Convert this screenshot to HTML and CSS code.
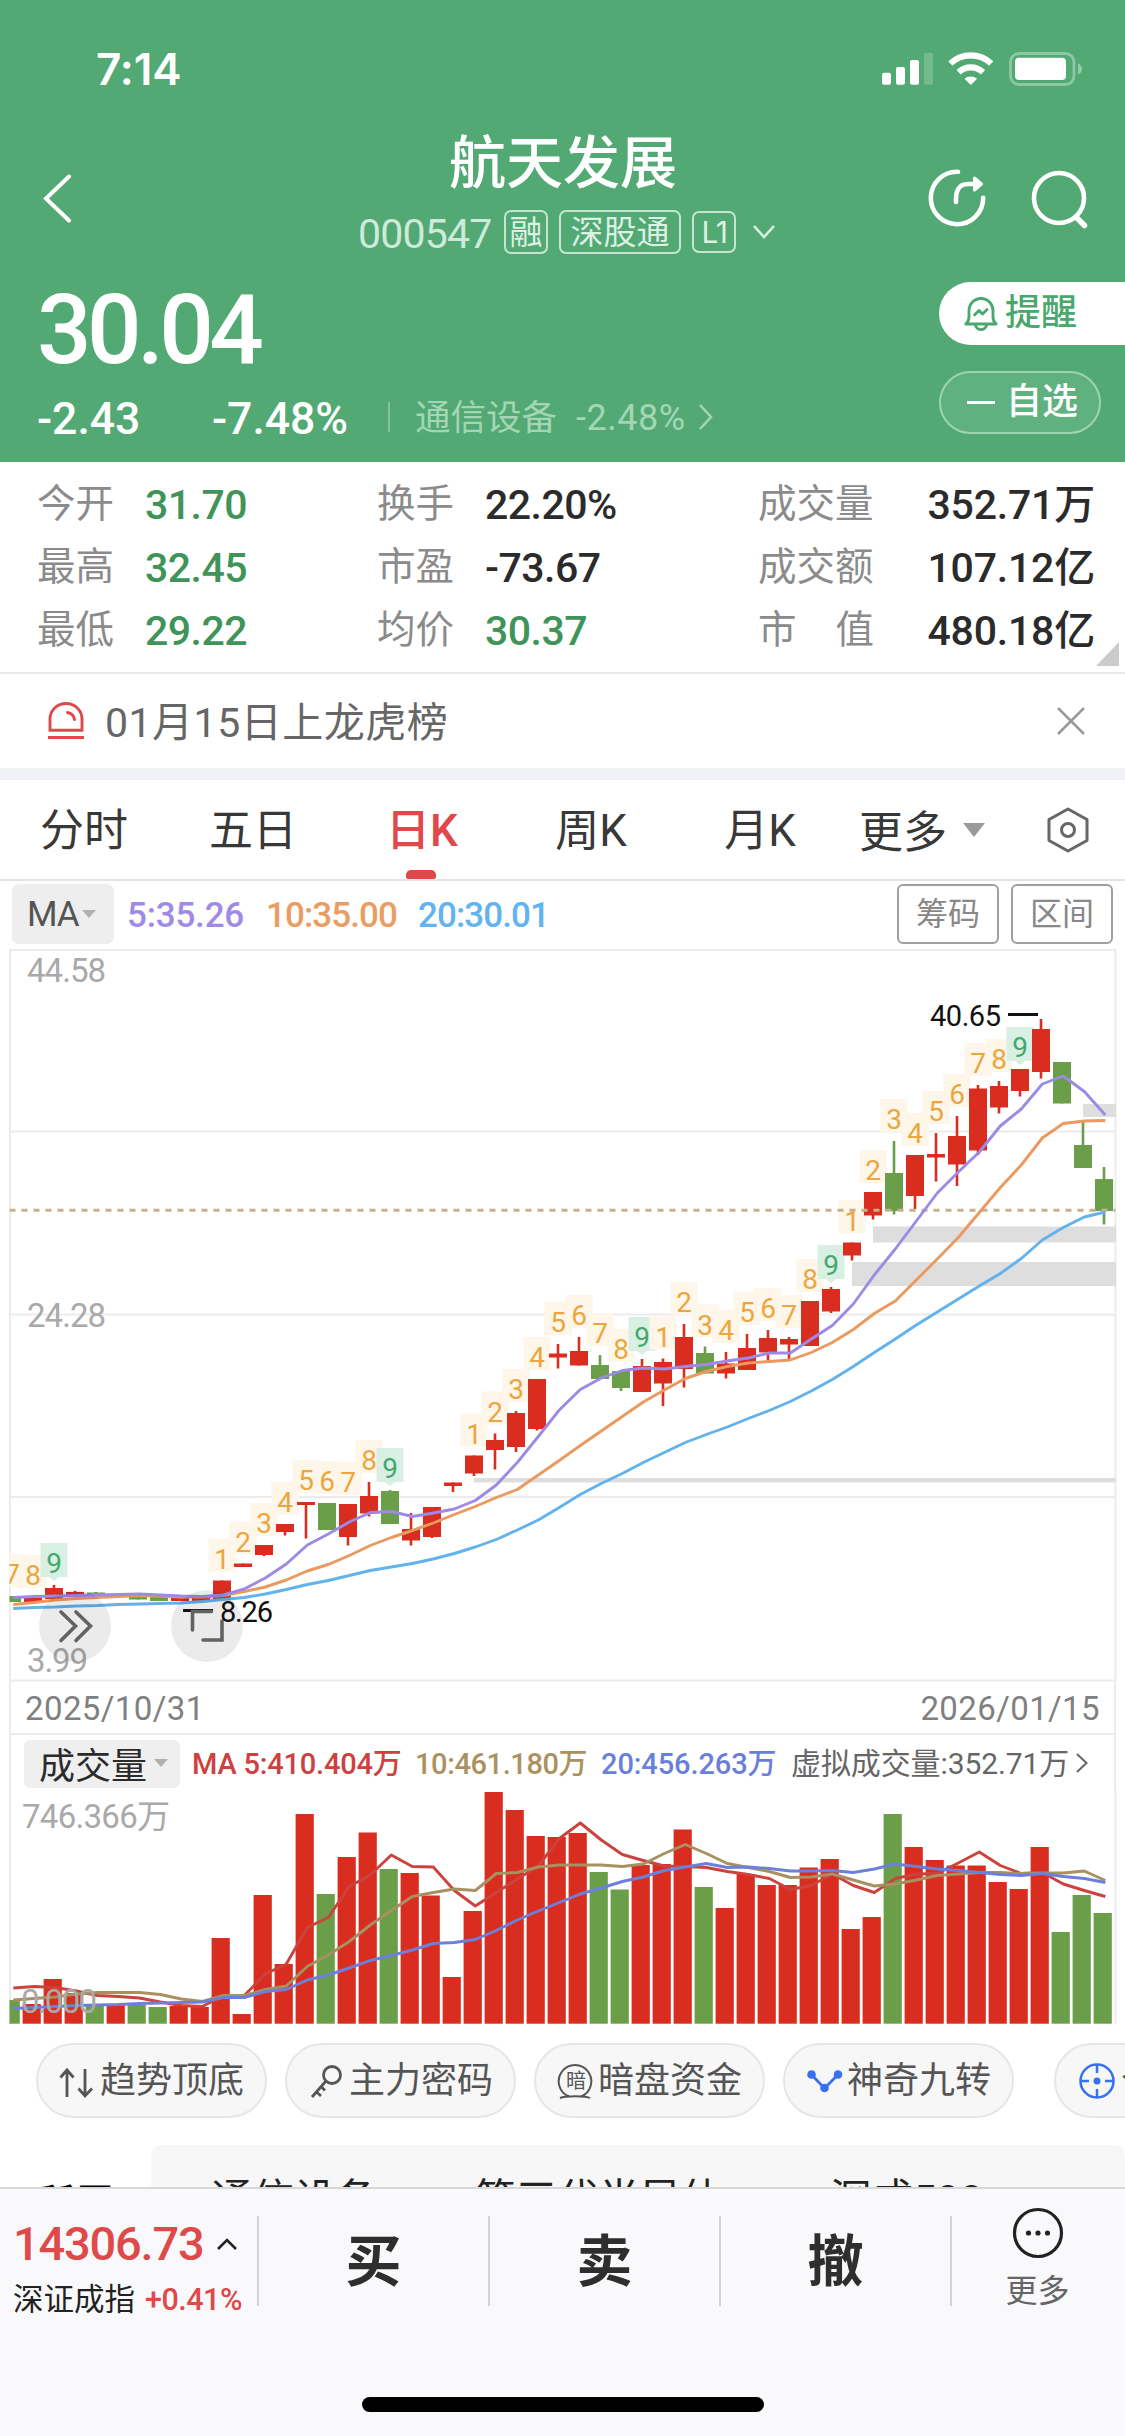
FILE: index.html
```html
<!DOCTYPE html>
<html lang="zh-CN">
<head>
<meta charset="utf-8">
<title>航天发展 000547</title>
<link rel="stylesheet" href="styles.css">
</head>
<body>
<div class="screen">
  <header class="header">
    <div class="status">
      <span class="time">7:14</span>
      <svg class="status-icons" viewBox="882 50 202 38" fill="#fff">
        <rect x="882" y="72.7" width="9" height="12" rx="2"/>
        <rect x="896" y="67" width="9" height="17.7" rx="2"/>
        <rect x="910" y="60" width="9" height="24.7" rx="2"/>
        <rect x="924" y="52.7" width="9" height="32" rx="2" opacity=".2"/>
        <path d="M970.8 85l-6.3-6.2a9.6 9.6 0 0 1 12.6 0z"/>
        <g fill="none" stroke="#fff" stroke-width="6.2">
          <path d="M958.6 72.2a18 18 0 0 1 24.4 0"/>
          <path d="M950.4 63.6a29.5 29.5 0 0 1 40.8 0"/>
        </g>
        <rect x="1010.5" y="53.5" width="63.5" height="31" rx="8.5" fill="none" stroke="#fff" stroke-width="2.8" opacity=".35"/>
        <rect x="1015" y="57.8" width="51" height="22.3" rx="4"/>
        <path d="M1078 63.5q4 2 4 5.500t-4 5.500z" opacity=".4"/>
      </svg>
    </div>
    <div class="nav">
      <svg class="back" viewBox="44 174 30 50"><path d="M70 176.500 47 198.500l23 22" fill="none" stroke="#fff" stroke-width="4" stroke-linecap="round"/></svg>
      <div class="title-block">
        <h1 class="title">航天发展</h1>
        <div class="subtitle">
          <span class="code">000547</span>
          <span class="tag tag-one">融</span>
          <span class="tag tag-three">深股通</span>
          <span class="tag tag-l">L1</span>
          <svg class="chev" viewBox="0 0 24 16"><path d="M2 2l10 11L22 2" fill="none" stroke="#d9efe0" stroke-width="2.600"/></svg>
        </div>
      </div>
      <svg class="nav-icons" viewBox="926 166 164 64" fill="none" stroke="#fff" stroke-width="4.600" stroke-linecap="round">
        <path d="M958 171.800a26.200 26.200 0 1 0 25.200 26"/>
        <path d="M956 202c-.5-10 2-18 12-18h7"/>
        <path d="M974.500 178l7 6-7 6z" fill="#fff" stroke-width="3" stroke-linejoin="round"/>
        <circle cx="1059" cy="198" r="25"/>
        <path d="M1076.500 217.500l8 8" stroke-width="5.500"/>
      </svg>
    </div>
    <div class="quote">
      <div class="quote-left">
        <div class="price">30.04</div>
        <div class="change">
          <span class="delta">-2.43</span>
          <span class="delta pct">-7.48%</span>
          <i class="bar"></i>
          <span class="sector">通信设备</span>
          <span class="sector-pct">-2.48%</span>
          <svg class="sector-chev" viewBox="0 0 16 28"><path d="M2 2l11 12L2 26" fill="none" stroke="#a4d6b5" stroke-width="2.500"/></svg>
        </div>
      </div>
      <div class="quote-right">
        <div class="pill remind">
          <svg viewBox="0 0 34 36" fill="none" stroke="#4aa76e" stroke-width="2.800" stroke-linejoin="round" stroke-linecap="round">
            <path d="M1.800 28h30.400c-2.500-2-3.200-4-3.200-7v-6.500a12 12 0 0 0-24 0V21c0 3-.8 5-3.200 7z"/>
            <path d="M10.500 19l4.500-4.500 3.500 3.500 4.500-4.500"/><path d="M11.500 29.500c2 5.500 9 5.500 11 0"/>
          </svg>
          <span>提醒</span>
        </div>
        <div class="pill watch"><i class="minus"></i><span>自选</span></div>
      </div>
    </div>
  </header>

  <section class="stats">
    <span class="k">今开</span><b class="v up">31.70</b><span class="k">换手</span><b class="v">22.20%</b><span class="k">成交量</span><b class="v end">352.71万</b>
    <span class="k">最高</span><b class="v up">32.45</b><span class="k">市盈</span><b class="v">-73.67</b><span class="k">成交额</span><b class="v end">107.12亿</b>
    <span class="k">最低</span><b class="v up">29.22</b><span class="k">均价</span><b class="v up">30.37</b><span class="k spread"><i>市</i><i>值</i></span><b class="v end">480.18亿</b>
    <i class="fold"></i>
  </section>

  <section class="notice">
    <svg class="siren" viewBox="0 0 36 38" fill="none" stroke="#e0494c" stroke-width="2.900">
      <path d="M2 28.300V17a16 15.500 0 0 1 32 0v11.300zM0 35.500h36"/><path d="M19.500 10.500q6 1 7 7" stroke-linecap="round"/>
    </svg>
    <span class="notice-text">01月15日上龙虎榜</span>
    <svg class="close" viewBox="0 0 28 28"><path d="M1 1l26 26M27 1L1 27" stroke="#999" stroke-width="2.500"/></svg>
  </section>

  <nav class="tabs">
    <span class="tab">分时</span><span class="tab">五日</span><span class="tab active">日K</span><span class="tab">周K</span><span class="tab">月K</span>
    <span class="more">更多</span><i class="tri"></i>
    <svg class="hex" viewBox="0 0 42 46" fill="none" stroke="#666" stroke-width="3" stroke-linejoin="round"><path d="M21 2l19 10.500v21L21 44 2 33.500v-21z"/><circle cx="21" cy="23" r="6.500"/></svg>
  </nav>

  <div class="ma-row">
    <span class="ma-btn">MA<i class="tri small"></i></span>
    <span class="ma m5">5:35.26</span><span class="ma m10">10:35.00</span><span class="ma m20">20:30.01</span>
    <span class="box-btn first">筹码</span><span class="box-btn">区间</span>
  </div>

  <svg class="pane" id="price" viewBox="0 946 1125 736"></svg>
  <div class="dates"><span>2025/10/31</span><span>2026/01/15</span></div>
  <div class="vol-head">
    <span class="vol-btn">成交量<i class="tri small"></i></span>
    <span class="vm v5">MA 5:410.404万</span><span class="vm v10">10:461.180万</span><span class="vm v20">20:456.263万</span>
    <span class="virt">虚拟成交量:352.71万</span>
    <svg class="virt-chev" viewBox="0 0 12 20"><path d="M1 1l9.500 9L1 19" fill="none" stroke="#666" stroke-width="2"/></svg>
  </div>
  <svg class="pane" id="volume" viewBox="0 1790 1125 236"></svg>

  <div class="chips">
    <div class="chip">
      <svg viewBox="0 0 38 38" fill="none" stroke="#555" stroke-width="2.800"><path d="M8 35V8M1.500 15.500L8 8l6.500 7.500M26 7v27M19.500 26.500L26 34l7-7.500"/></svg><span>趋势顶底</span>
    </div>
    <div class="chip">
      <svg viewBox="0 0 38 38" fill="none" stroke="#555" stroke-width="2.800"><circle cx="24" cy="13" r="8.500"/><path d="M18 19L4 35M8.500 30l4.500 4M13 24.500l4 4"/></svg><span>主力密码</span>
    </div>
    <div class="chip">
      <svg viewBox="0 0 38 38" fill="none" stroke="#555" stroke-width="2"><path d="M12 34.500a16.300 16.300 0 1 1 12 0M3 36c5-2.500 26-2.500 30 0"/><text class="dark-glyph" x="9" y="26">暗</text></svg><span>暗盘资金</span>
    </div>
    <div class="chip">
      <svg viewBox="0 0 38 38"><path d="M5.500 12.500l13 14 13.500-14" fill="none" stroke="#3671f0" stroke-width="2.800"/><g fill="#3671f0"><circle cx="5.500" cy="12.500" r="4.300"/><circle cx="18.500" cy="26" r="4.300"/><circle cx="32" cy="12.500" r="4.300"/></g></svg><span>神奇九转</span>
    </div>
    <i class="chip-sep"></i>
    <div class="chip last">
      <svg viewBox="0 0 38 38" fill="none" stroke="#3671f0" stroke-width="2.500"><circle cx="19" cy="19" r="16.500"/><path d="M19 2v9M19 27v9M2 19h9M27 19h9"/><circle cx="19" cy="19" r="3.500" fill="#3671f0" stroke="none"/></svg><span>个股</span>
    </div>
  </div>

  <div class="related">
    <b class="rel-title">所属</b>
    <div class="rel-panel"><span>通信设备</span><span>第三代半导体</span><span>深成500</span></div>
  </div>

  <footer class="footer">
    <div class="actions">
      <div class="index">
        <div class="index-top"><span class="index-val">14306.73</span><svg viewBox="0 0 20 12"><path d="M1 11l9-9 9 9" fill="none" stroke="#222" stroke-width="2.600"/></svg></div>
        <div class="index-sub"><span>深证成指</span><span class="red">+0.41%</span></div>
      </div>
      <div class="act">买</div><div class="act">卖</div><div class="act">撤</div>
      <div class="act-more">
        <svg viewBox="0 0 52 52"><circle cx="26" cy="26" r="23.500" fill="none" stroke="#222" stroke-width="3.200"/><g fill="#222"><circle cx="16.500" cy="26" r="2.600"/><circle cx="26" cy="26" r="2.600"/><circle cx="35.500" cy="26" r="2.600"/></g></svg>
        <span>更多</span>
      </div>
    </div>
    <i class="home"></i>
  </footer>
</div>
<script src="chart.js"></script>
</body>
</html>
```
FILE: styles.css
```css
* { box-sizing: border-box; }
body { margin: 0; background: #fff; font-family: Roboto, "Noto Sans CJK SC", sans-serif; }
i { font-style: normal; display: block; }
svg { display: block; flex: none; }
span, b { white-space: nowrap; }
.screen { width: 1125px; height: 2436px; overflow: hidden; display: flex; flex-direction: column; }
.screen > * { flex: none; }

.header { height: 462px; background: #52a974; color: #fff; }
.status { height: 132px; padding: 50px 41px 0 96px; display: flex; justify-content: space-between; }
.time { font: 600 44px/38px Inter, sans-serif; letter-spacing: -.1px; }
.status-icons { width: 202px; height: 38px; }
.nav { height: 134px; display: flex; }
.back { width: 30px; height: 50px; margin: 42px 0 0 43px; }
.title-block { width: 853px; }
.title { margin: 0; padding-left: 376px; font-size: 57px; font-weight: 500; line-height: 64px; white-space: nowrap; }
.subtitle { display: flex; align-items: center; height: 44px; margin-top: 14px; padding-left: 285px; }
.code { font-size: 41px; line-height: 44px; letter-spacing: -.8px; color: #cfeada; width: 146px; padding-top: 3px; }
.tag { height: 44px; line-height: 41px; border: 2px solid #c5e5d0; border-radius: 7px; font-size: 33px; text-align: center; color: #dcf1e3; margin-right: 11px; }
.tag-one { width: 44px; }
.tag-three { width: 122px; }
.tag-l { width: 44px; height: 42px; line-height: 38px; font-size: 30px; font-weight: 400; font-family: Inter, sans-serif; letter-spacing: -1.500px; }
.chev { width: 24px; height: 16px; margin-left: 5px; }
.nav-icons { width: 164px; height: 64px; margin-top: 34px; }
.quote { display: flex; justify-content: space-between; height: 196px; }
.price { padding-left: 37px; font-size: 96px; line-height: 96px; font-weight: 500; letter-spacing: -4.500px; margin-top: 16px; }
.change { display: flex; align-items: center; height: 50px; margin-top: 14px; padding: 3px 0 0 37px; }
.delta { font-size: 44.500px; font-weight: 500; width: 175px; }
.pct { width: 176px; }
.bar { width: 2px; height: 30px; background: #85c39d; margin-top: -3px; }
.sector { margin-left: 25px; font-size: 35.500px; width: 161px; color: #a4d6b5; line-height: 40px; margin-top: -2px; }
.sector-pct { font-size: 36px; width: 122px; color: #a4d6b5; letter-spacing: .5px; line-height: 40px; margin-top: -1px; }
.sector-chev { width: 16px; height: 28px; margin-top: -3px; }
.quote-right { width: 186px; padding-top: 16px; }
.pill { height: 63px; display: flex; align-items: center; font-size: 36px; font-weight: 500; }
.pill span { line-height: 40px; margin-top: -1px; }
.remind { background: #fff; color: #4aa76e; border-radius: 32px 0 0 32px; padding-left: 25px; }
.remind svg { width: 34px; height: 36px; margin-right: 7px; }
.watch { width: 162px; margin-top: 26px; border: 2px solid #9fd3b0; background: #5fb27f; border-radius: 32px; padding-left: 26px; }
.minus { width: 28px; height: 3px; background: #fff; margin-right: 11px; }

.stats { position: relative; height: 212px; border-bottom: 2px solid #e9e9e9; padding: 12px 30px 0 37px; display: grid; grid-template-columns: 108px 232px 108px 273px 152px 1fr; grid-auto-rows: 63px; line-height: 63px; }
.k { font-size: 38.500px; line-height: 59px; color: #8b8b8b; }
.v { font-size: 41px; font-weight: 500; color: #2b2b2b; letter-spacing: -.5px; }
.up { color: #3f9459; }
.end { text-align: right; letter-spacing: -.2px; }
.spread { display: flex; justify-content: space-between; width: 116px; }
.fold { position: absolute; right: 6px; bottom: 6px; width: 0; height: 0; border-left: 23px solid transparent; border-bottom: 24px solid #ccc; }

.notice { height: 106px; border-bottom: 12px solid #f1f2f6; display: flex; align-items: center; padding: 0 40px 0 48px; }
.siren { width: 36px; height: 38px; }
.notice-text { flex: 1; margin: -4px 0 0 21px; font-size: 41px; letter-spacing: .5px; color: #666; }
.close { width: 28px; height: 28px; }

.tabs { height: 101px; border-bottom: 2px solid #e3e3e3; display: flex; align-items: center; font-size: 44px; color: #383838; }
.tab { position: relative; width: 169px; text-align: center; line-height: 96px; padding: 3px 1px 0 0; }
.active { color: #e0484a; font-weight: 500; }
.active::after { content: ""; position: absolute; left: 68px; bottom: 0; width: 30px; height: 9px; border-radius: 5px 5px 2px 2px; background: #e0484a; }
.more { margin: -2px 0 0 14px; width: 104px; }
.tri { width: 0; height: 0; border: 11px solid transparent; border-top: 14px solid #999; border-bottom: 0; }
.tri.small { border-width: 8px 7px 0; border-top-color: #b0b0b0; }
.hex { width: 42px; height: 46px; margin-left: 62px; }

.ma-row { height: 65px; padding: 3px 12px 2px; display: flex; align-items: center; }
.ma-btn { width: 102px; height: 60px; background: #eee; border-radius: 7px; display: flex; align-items: center; padding-left: 15px; font-size: 35px; letter-spacing: -1px; color: #555; gap: 3px; margin-right: 13px; }
.ma { font-size: 35px; font-weight: 500; letter-spacing: -.9px; padding-top: 2px; }
.m5 { width: 139px; color: #9f8ae6; letter-spacing: -.2px; }
.m10 { width: 152px; color: #ea9d63; }
.m20 { flex: 1; color: #62b4f0; }
.box-btn { width: 102px; height: 60px; line-height: 56px; border: 2px solid #a0a0a0; border-radius: 6px; text-align: center; font-size: 32px; color: #888; }
.first { margin-right: 12px; }

.pane { width: 1125px; font-family: Roboto, "Noto Sans CJK SC", sans-serif; }
#price { height: 736px; }
#volume { height: 236px; }
.axis { font-size: 33px; fill: #a9a9a9; }
.mark { font-size: 29px; fill: #111; }
.count { font-size: 28px; fill: #eba640; text-anchor: middle; }
.count.nine { fill: #43a86b; }
.dates { height: 53px; line-height: 53px; margin: 0 9px; padding: 0 14px; border: 0 solid #ececec; border-width: 0 2px 2px; display: flex; justify-content: space-between; font-size: 33px; color: #808080; letter-spacing: .4px; }
.vol-head { height: 55px; margin: 0 9px; padding: 5px 0 2px 13px; border: 0 solid #ececec; border-width: 0 2px; display: flex; align-items: center; font-size: 29px; letter-spacing: -.4px; }
.vol-btn { width: 156px; height: 48px; background: #efefef; border-radius: 6px; padding: 0 0 3px 15px; margin-right: 12px; display: flex; align-items: center; gap: 7px; font-size: 36px; letter-spacing: 0; color: #2b2b2b; }
.vm { font-weight: 500; line-height: 40px; }
.v5 { width: 223px; color: #cf4040; letter-spacing: -.2px; }
.v10 { width: 186px; color: #ab9160; }
.v20 { width: 190px; color: #6a7fdc; letter-spacing: -.1px; }
.virt { width: 285px; color: #666; font-size: 30px; letter-spacing: -.1px; line-height: 40px; margin-top: -1px; }
.virt-chev { width: 12px; height: 20px; margin-top: -3px; }

.chips { height: 119px; padding: 17px 0 0 36px; display: flex; gap: 18px; }
.chip { flex: none; width: 231px; height: 75px; border: 2px solid #e6e6e6; border-radius: 38px; background: #f7f7f7; display: flex; align-items: center; justify-content: center; font-size: 36px; color: #555; }
.chip svg { width: 38px; height: 38px; margin: 1px 3px 0 0; }
.chip span { line-height: 40px; margin-top: 1px; }
.dark-glyph { font: 20px "Noto Sans CJK SC", sans-serif; fill: #555; stroke: none; }
.chip-sep { width: 2px; height: 48px; background: #e0e0e0; margin-top: 13px; }
.last { padding-left: 22px; justify-content: flex-start; margin-left: 4px; }
.last span { margin-left: 2px; }

.related { height: 42px; overflow: hidden; display: flex; }
.rel-title { width: 151px; padding: 37px 0 0 36px; font-size: 39px; line-height: 44px; }
.rel-panel { flex: 1; height: 120px; background: #f7f7f7; border-radius: 10px; font-size: 41.500px; line-height: 56px; color: #222; padding: 27px 0 0 60px; display: grid; grid-template-columns: 263px 356px 1fr; }

.footer { flex: 1 1 0; background: #f9f9fb; border-top: 2px solid #d8d8d8; display: flex; flex-direction: column; align-items: center; }
.actions { width: 1125px; height: 208px; padding-top: 27px; display: flex; }
.index { width: 257px; padding: 0 0 0 13px; }
.index-top { display: flex; align-items: center; height: 55px; font-size: 47px; font-weight: 500; color: #de4a4a; letter-spacing: -1.200px; }
.index-val { width: 204px; }
.index-top svg { width: 20px; height: 12px; }
.index-sub { display: flex; font-size: 30.500px; line-height: 58px; color: #222; gap: 10px; }
.red { color: #de4a4a; font-weight: 500; letter-spacing: -.5px; }
.act { width: 231px; height: 90px; line-height: 92px; border-left: 2px solid #d4d4d6; text-align: center; font-size: 56px; font-weight: 700; color: #2e2e2e; }
.act-more { flex: 1; height: 90px; border-left: 2px solid #d4d4d6; display: flex; flex-direction: column; align-items: center; font-size: 32px; line-height: 48px; color: #666; padding-right: 2px; }
.act-more svg { width: 52px; height: 52px; margin-top: -9px; margin-bottom: 8px; }
.home { width: 402px; height: 15px; border-radius: 8px; background: #000; }
```
FILE: chart.js
```js
const RED = '#d92d20', GREEN = '#6b9e49';
const STEP = 21;

// [top, bottom, high, low, direction]; slot 5 is hidden behind the averages
const candles = [
  [1596,1602,1596,1602,0],[1597.5,1602,1597,1602,1],[1588,1599,1585,1599,1],[1592,1595,1591,1595,1],[1592.5,1595,1592,1595,0],
  [1594,1596,1594,1596,0],[1594,1599.5,1594,1599.5,0],[1597,1601,1597,1601,0],[1598,1601,1598,1601,1],[1598,1601,1598,1601,1],
  [1580.5,1599,1580.5,1599,1],[1563.5,1567,1563.5,1567,1],[1545,1555,1545,1556,1],[1524,1532,1524,1535.5,1],[1502,1505,1502,1538.5,1],
  [1503,1530,1503,1530,0],[1504,1537,1504,1545.5,1],[1496,1513.5,1482,1516.5,1],[1491,1524,1490,1524,0],[1529,1540.5,1513,1545.5,1],
  [1507,1537,1507,1538,1],[1482.5,1486,1482.5,1492,1],[1455.5,1473.5,1455.5,1476,1],[1440,1450,1433.5,1469.5,1],[1413,1447,1411,1452,1],
  [1379,1429,1379,1430.5,1],[1353.5,1357.5,1344,1368.5,1],[1351,1365.5,1337,1365.5,1],[1365,1379,1355,1379,0],[1371,1388,1371,1391,0],
  [1366,1392,1359,1392,1],[1362,1383.5,1358.5,1406,1],[1337,1369,1324,1387.5,1],[1353,1373.5,1346.5,1373.5,0],[1363.5,1373.5,1352,1378.5,1],
  [1348,1370,1334,1370,1],[1338,1352.5,1330,1360,1],[1339,1344.5,1337,1360,1],[1301,1346,1301,1346,1],[1289,1311.5,1287,1313,1],
  [1242.5,1255.5,1242.5,1260.5,1],[1192,1215.5,1192,1219.5,1],[1173,1211,1141,1214.5,0],[1155,1196,1155,1209,1],[1154,1157.5,1133,1181.5,1],
  [1136,1164.5,1116,1186,1],[1088.5,1150.5,1085,1155,1],[1086,1107.5,1081,1113.5,1],[1069,1091,1069,1096.5,1],[1029,1072,1019,1078.5,1],
  [1062,1103.5,1062,1103.5,0],[1145,1168,1120,1168,0],[1179,1211,1167,1224.5,0]
];

const counts = {0:7,1:8,2:9};
for (let n = 1; n <= 9; n++) { counts[9+n] = n; counts[21+n] = n; counts[30+n] = n; counts[39+n] = n; }

const priceMA = {
  '#62b2ee': [1608.5,1607.5,1607,1606,1605.5,1604.5,1604,1603.5,1603,1601.5,1599.5,1597.5,1594,1589.5,1584.5,1580.5,1575.5,1570.5,1567,1563.5,1559,1553.5,1547,1539.5,1530,1520,1507.5,1494.5,1483.5,1473.5,1462.5,1452.5,1442.5,1434.5,1427,1418.5,1410.5,1401.5,1391,1379.5,1366.5,1352.5,1339,1325,1312,1299,1286,1273.5,1258.5,1240,1227.5,1217,1212],
  '#ea995f': [1604.5,1602.5,1600,1598.5,1597.5,1596.5,1595.5,1596,1597,1597,1595.5,1591.5,1587,1580,1571,1564.5,1555.5,1545.5,1537.5,1530.5,1523,1514.5,1506.5,1497.5,1489.5,1475,1460.5,1445.5,1431,1416.5,1402,1390,1378.5,1371.5,1366.5,1363,1361.5,1360,1352.5,1342.5,1329.5,1313.5,1301,1280,1259,1237.5,1212.5,1187.5,1165,1138,1123.5,1121,1120.5],
  '#9d89e6': [1597.5,1596.5,1596,1595.5,1595,1594.5,1594,1595,1596,1596.5,1595,1589,1578,1564,1545,1534,1522,1512.5,1511.5,1516.5,1513,1509,1500.5,1485,1462.5,1436.5,1410,1389.5,1378,1370.5,1368,1369,1366.5,1364.5,1361,1358,1353,1353,1339,1325.5,1304,1275,1249,1221,1193,1172,1152,1126,1109,1084,1076,1091.5,1115]
};

const volumes = [2000,2004,1979,1993,2005,2004,2005,2007,2006,2007,1938,2014,1895,1964,1814,1894,1857,1832.5,1869,1873,1895.5,1977,1911,1792,1810,1836,1837,1833,1872,1889.5,1865,1864,1829.5,1887,1908,1874,1885,1885,1867.5,1859,1929,1917,1814,1847,1860,1865.5,1865.5,1882,1889,1847,1932,1895,1913];
const volGreen = new Set([0,4,6,7,15,18,28,29,33,42,50,51,52]);

const volMA = {
  '#cc433e': [1988,1986.5,1987.5,1991,1995.5,1996.5,1998,2002,2005.5,2006.5,1995.5,1995.5,1974,1964,1927.5,1917.5,1886.5,1875,1855,1866.5,1867,1890.5,1906,1892.5,1879,1866,1838.5,1823,1840,1854.5,1860.5,1866,1866.5,1867.5,1871.5,1874.5,1878.5,1889.5,1885.5,1874,1885.5,1892.5,1878.5,1874,1873.5,1863,1852,1865.5,1873.5,1872.5,1884,1890.5,1896.5],
  '#a89060': [2000,1998.5,1997,1994,1992.5,1992.5,1992.5,1994.5,1999,2001.5,1995.5,1995.5,1989.5,1986,1966.5,1955,1941.5,1925,1910.5,1896.5,1892.5,1889,1890.5,1873.5,1872.5,1867,1865,1865,1865,1866.5,1864,1853.5,1844.5,1853.5,1863.5,1867.5,1871.5,1877.5,1877,1874,1880,1886,1884,1880,1875.5,1874,1872.5,1872.5,1873.5,1873,1873,1871,1880.5],
  '#6c80da': [2008.5,2007.5,2006.5,2005.5,2005,2004.5,2003.5,2003,2002.5,2002,1997.5,1997.5,1991.5,1989.5,1980,1975,1968,1960.5,1955.5,1950,1943.5,1942.5,1939.5,1930.5,1920,1911,1902.5,1894,1888,1881.5,1877,1870.5,1867,1863.5,1867.5,1867,1868.5,1871,1871,1870.5,1872.5,1869,1864,1866.5,1869,1870.5,1872.5,1874.5,1875.5,1873.5,1876.5,1878.5,1882.5]
};

const rect = (x, y, w, h, fill) => `<rect x="${x}" y="${y}" width="${w}" height="${h}" fill="${fill}"/>`;
const lines = set => Object.entries(set).map(([color, ys]) =>
  `<polyline fill="none" stroke="${color}" stroke-width="2.9" stroke-linejoin="round" points="${ys.map((y, i) => `${13.3 + STEP * i},${y}`).join(' ')}"/>`).join('');
const clip = (id, y, h) => `<clipPath id="${id}">${rect(9.5, y, 1106, h, '#000')}</clipPath>`;

function drawPrice() {
  let s = clip('pc', 940, 760);
  for (const y of [949, 1130.5, 1313.5, 1496, 1679.5]) s += rect(9, y, 1107, 2, '#ececec');
  s += rect(9, 949, 2, 733, '#ececec') + rect(1114.5, 949, 2, 733, '#ececec');
  s += rect(1083, 1104, 33, 13, '#dedede') + rect(873, 1226.5, 243, 16, '#dedede') + rect(852, 1262, 264, 24, '#dedede') + rect(474, 1478, 642, 4.5, '#dedede');
  s += '<text class="axis" x="27" y="982" textLength="79">44.58</text><text class="axis" x="27" y="1326.500" textLength="79">24.28</text><text class="axis" x="27" y="1671.500" textLength="61">3.99</text>';
  s += '<g clip-path="url(#pc)">';
  for (const [i, n] of Object.entries(counts)) {
    const x = 12 + STEP * i, base = candles[i][2] - 12, nine = n === 9;
    s += rect(x - 13.5, base - 30, 27, nine ? 34 : 33, nine ? '#d8efe3' : '#fef6e8');
    if (nine) s += `<path d="M${x - 5} ${base + 4}h10l-5 4z" fill="#d8efe3"/>`;
    s += `<text class="count${nine ? ' nine' : ''}" x="${x}" y="${base}">${n}</text>`;
  }
  candles.forEach(([t, b, h, l, up], i) => {
    const x = 12 + STEP * i, c = up ? RED : GREEN;
    s += rect(x - 9, t, 18, b - t, c) + rect(x - 1.3, h, 2.6, l - h, c);
  });
  s += '<path d="M9.500 1210.300H1116" stroke="#c6b18c" stroke-width="3" stroke-dasharray="6 6"/>' + lines(priceMA) + '</g>';
  s += '<circle cx="75" cy="1626" r="36" fill="#000" opacity=".08"/><circle cx="207" cy="1626" r="36" fill="#000" opacity=".08"/>';
  s += rect(1008, 1013, 30, 3, '#111') + rect(183, 1609, 30, 3, '#111');
  s += '<g fill="none" stroke="#636363" stroke-width="3.600" stroke-linecap="round"><path d="M61 1612l14.500 14L61 1640.500M76 1612l14.500 14L76 1640.500"/><path d="M192.500 1630v-18.500h19M222 1621v19h-19"/></g>';
  s += '<text class="mark" x="930" y="1026" textLength="71">40.65</text><text class="mark" x="220" y="1622" textLength="53">8.26</text>';
  document.getElementById('price').innerHTML = s;
}

function drawVolume() {
  let s = clip('vc', 1780, 260) + rect(9, 1790, 2, 234, '#ececec') + rect(1114.5, 1790, 2, 234, '#ececec');
  s += '<text class="axis" x="22" y="1828" textLength="148">746.366万</text><g clip-path="url(#vc)">';
  volumes.forEach((y, i) => { s += rect(1.6 + STEP * i, y, 18.2, 2023.7 - y, volGreen.has(i) ? GREEN : RED); });
  s += lines(volMA) + '</g><text class="axis" x="21" y="2013" textLength="76">0.000</text>';
  document.getElementById('volume').innerHTML = s;
}

drawPrice();
drawVolume();
```
